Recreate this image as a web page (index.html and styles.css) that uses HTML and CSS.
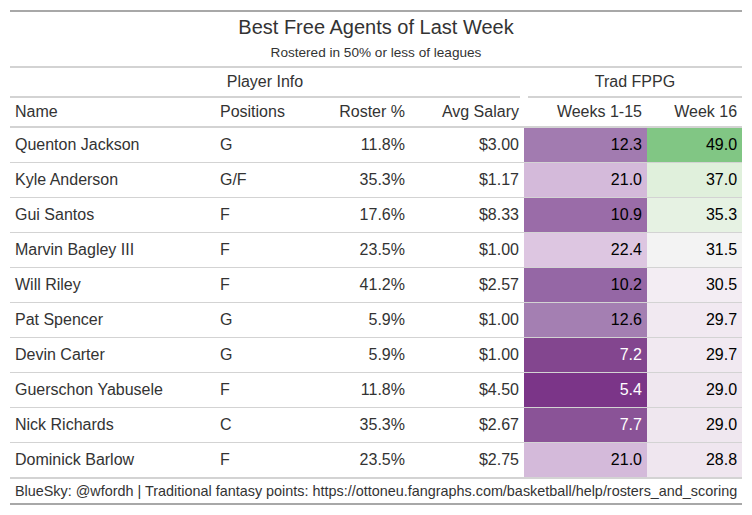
FILE: index.html
```html
<!DOCTYPE html>
<html>
<head>
<meta charset="utf-8">
<link rel="stylesheet" href="styles.css">
</head>
<body>
<div class="wrap">
<table class="gt">
  <colgroup>
    <col class="c-name"><col class="c-pos"><col class="c-ros"><col class="c-sal"><col class="c-wk"><col class="c-w16">
  </colgroup>
  <thead>
    <tr><td colspan="6" class="title">Best Free Agents of Last Week</td></tr>
    <tr><td colspan="6" class="subtitle">Rostered in 50% or less of leagues</td></tr>
    <tr class="spanners">
      <th colspan="4" class="sp sp-left"><div class="sp-label">Player Info</div></th>
      <th colspan="2" class="sp sp-right"><div class="sp-label">Trad FPPG</div></th>
    </tr>
    <tr class="labels">
      <th class="left">Name</th>
      <th class="left">Positions</th>
      <th class="right">Roster %</th>
      <th class="right">Avg Salary</th>
      <th class="right">Weeks 1-15</th>
      <th class="right">Week 16</th>
    </tr>
  </thead>
  <tbody>
    <tr><td>Quenton Jackson</td><td>G</td><td class="right">11.8%</td><td class="right">$3.00</td><td class="right num" style="background:#a27bb0">12.3</td><td class="right num" style="background:#81c684">49.0</td></tr>
    <tr><td>Kyle Anderson</td><td>G/F</td><td class="right">35.3%</td><td class="right">$1.17</td><td class="right num" style="background:#d4bada">21.0</td><td class="right num" style="background:#e0f0dc">37.0</td></tr>
    <tr><td>Gui Santos</td><td>F</td><td class="right">17.6%</td><td class="right">$8.33</td><td class="right num" style="background:#9a6ca8">10.9</td><td class="right num" style="background:#e6f2e3">35.3</td></tr>
    <tr><td>Marvin Bagley III</td><td>F</td><td class="right">23.5%</td><td class="right">$1.00</td><td class="right num" style="background:#ddc6e1">22.4</td><td class="right num" style="background:#f3f3f3">31.5</td></tr>
    <tr><td>Will Riley</td><td>F</td><td class="right">41.2%</td><td class="right">$2.57</td><td class="right num" style="background:#9567a5">10.2</td><td class="right num" style="background:#f3edf3">30.5</td></tr>
    <tr><td>Pat Spencer</td><td>G</td><td class="right">5.9%</td><td class="right">$1.00</td><td class="right num" style="background:#a47fb2">12.6</td><td class="right num" style="background:#f1e9f1">29.7</td></tr>
    <tr><td>Devin Carter</td><td>G</td><td class="right">5.9%</td><td class="right">$1.00</td><td class="right num light" style="background:#83468f">7.2</td><td class="right num" style="background:#f1e9f1">29.7</td></tr>
    <tr><td>Guerschon Yabusele</td><td>F</td><td class="right">11.8%</td><td class="right">$4.50</td><td class="right num light" style="background:#7b3588">5.4</td><td class="right num" style="background:#efe7ef">29.0</td></tr>
    <tr><td>Nick Richards</td><td>C</td><td class="right">35.3%</td><td class="right">$2.67</td><td class="right num light" style="background:#8a5397">7.7</td><td class="right num" style="background:#efe7ef">29.0</td></tr>
    <tr><td>Dominick Barlow</td><td>F</td><td class="right">23.5%</td><td class="right">$2.75</td><td class="right num" style="background:#d4bada">21.0</td><td class="right num" style="background:#efe6ef">28.8</td></tr>
  </tbody>
  <tfoot>
    <tr><td colspan="6" class="source">BlueSky: @wfordh | Traditional fantasy points: https://ottoneu.fangraphs.com/basketball/help/rosters_and_scoring</td></tr>
  </tfoot>
</table>
</div>
</body>
</html>
```
FILE: styles.css
```css
html, body {
  margin: 0;
  padding: 0;
  background: #ffffff;
}
.wrap {
  padding: 10px 0;
}
.gt {
  font-family: "Liberation Sans", Arial, sans-serif;
  color: #333333;
  font-size: 16px;
  width: 732px;
  margin: 0 auto;
  table-layout: fixed;
  border-collapse: separate;
  border-spacing: 0;
  border-top: 2px solid #a8a8a8;
  border-bottom: 2px solid #a8a8a8;
}
.c-name { width: 205px; }
.c-pos { width: 100px; }
.c-ros { width: 95px; }
.c-sal { width: 114px; }
.c-wk { width: 123px; }
.c-w16 { width: 95px; }

.gt td, .gt th {
  padding: 0;
  font-weight: normal;
}
.title {
  text-align: center;
  font-size: 20px;
  line-height: 23px;
  padding: 4px 5px 0 5px !important;
}
.subtitle {
  text-align: center;
  font-size: 13.6px;
  line-height: 16px;
  padding: 6px 5px 5px 5px !important;
  border-bottom: 2px solid #d3d3d3;
}
.sp {
  text-align: center;
  line-height: 18px;
  padding-top: 5px !important;
}
.sp-left { padding-right: 4px !important; }
.sp-right { padding-left: 4px !important; }
.sp-label {
  padding-bottom: 5px;
  border-bottom: 2px solid #d3d3d3;
}
.labels th {
  line-height: 18px;
  padding: 5px 5px !important;
  border-bottom: 2px solid #d3d3d3;
}
.left { text-align: left; }
.right { text-align: right; }
tbody td {
  line-height: 18px;
  padding: 8px 5px !important;
  border-top: 1px solid #d3d3d3;
  white-space: nowrap;
}
tbody tr:first-child td {
  border-top: none;
}
tbody tr:last-child td {
  border-bottom: 2px solid #d3d3d3;
}
.num { color: #000000; }
.num.light { color: #ffffff; }
.source {
  font-size: 14.4px;
  line-height: 16px;
  padding: 4px 5px !important;
  white-space: nowrap;
}
```
